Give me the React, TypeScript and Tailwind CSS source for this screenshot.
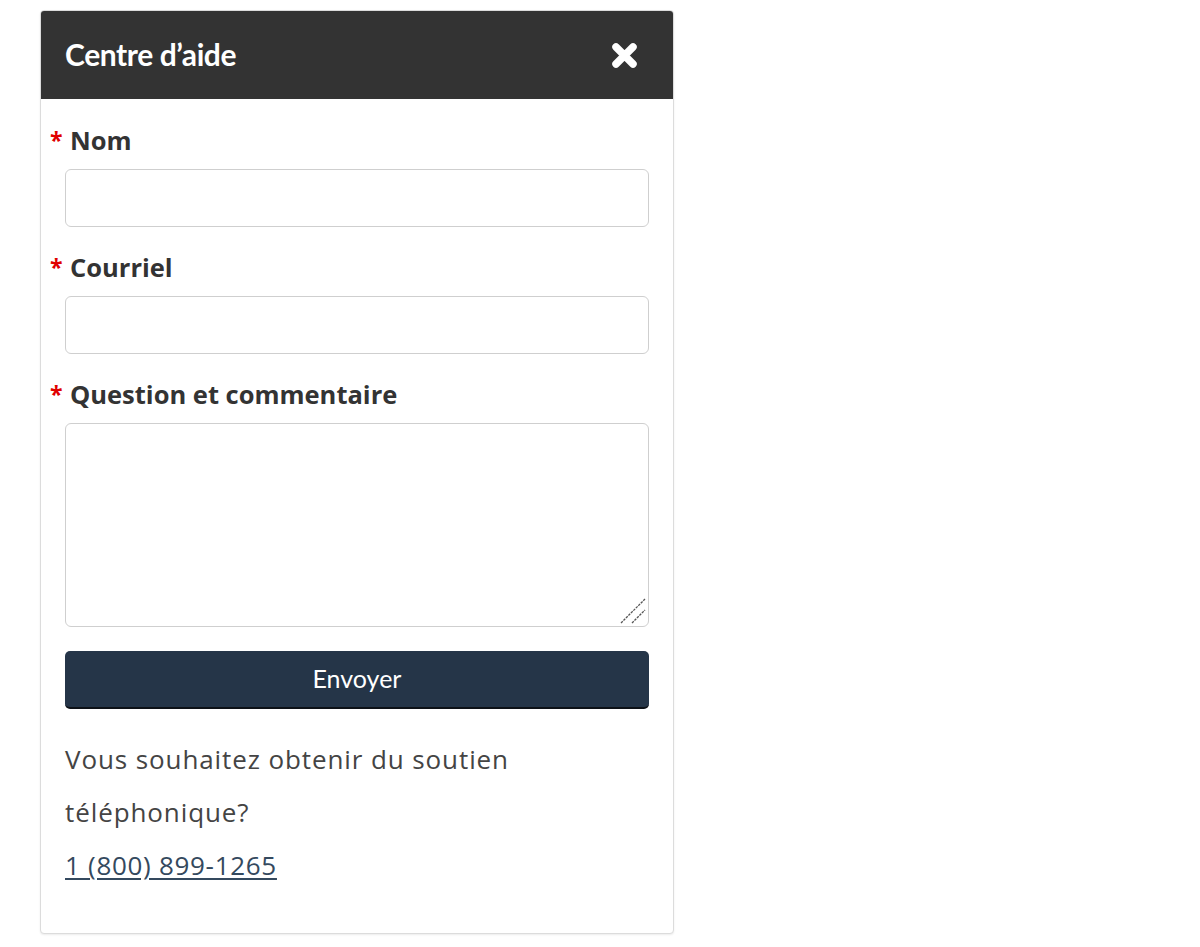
import React from "react";

function Label({ text }: { text: string }) {
  return (
    <div className="flex items-center h-[36px] leading-[36px] font-['Open_Sans',sans-serif] font-bold text-[25.5px] text-[#333] -translate-y-[2px]">
      <span className="w-[30px] pl-[9px] text-[#e00000] text-[23px]">*</span>
      <span className="-ml-[1px]">{text}</span>
    </div>
  );
}

export default function App() {
  return (
    <div className="w-[1200px] h-[947px] bg-white pt-[10px] pl-[40px]">
      <div className="w-[634px] border border-[#dcdcdc] rounded-[4px] overflow-hidden bg-white shadow-[0_1px_2px_rgba(0,0,0,0.08)]">
        <div className="h-[88px] bg-[#333333] flex items-center justify-between pl-[24px] pr-[35px]">
          <h1 className="font-['Lato',sans-serif] font-bold text-[30px] text-white tracking-[-0.4px] -translate-y-[1px]">Centre d’aide</h1>
          <svg width="27" height="27" viewBox="0 0 27 27" className="block">
            <path d="M5 5 L22 22 M22 5 L5 22" stroke="#fff" strokeWidth="7.5" strokeLinecap="round" />
          </svg>
        </div>
        <div className="pt-[25px] pb-[42px]">
          <Label text="Nom" />
          <div className="px-[24px] mt-[9px]">
            <input className="w-full h-[58px] border border-[#cfcfcf] rounded-[6px] bg-white" />
          </div>
          <div className="mt-[24px]">
            <Label text="Courriel" />
          </div>
          <div className="px-[24px] mt-[9px]">
            <input className="w-full h-[58px] border border-[#cfcfcf] rounded-[6px] bg-white" />
          </div>
          <div className="mt-[24px]">
            <Label text="Question et commentaire" />
          </div>
          <div className="px-[24px] mt-[9px]">
            <div className="relative">
              <textarea className="block w-full h-[204px] border border-[#cfcfcf] rounded-[6px] bg-white resize-none" />
              <svg width="28" height="28" viewBox="0 0 28 28" className="absolute right-[2px] bottom-[2px] pointer-events-none">
                <path d="M2 26 L26 2 M13 26 L26 13" stroke="#555" strokeWidth="1.3" strokeDasharray="2.5 1" />
              </svg>
            </div>
            <button className="mt-[24px] w-full h-[58px] bg-[#253548] border-b-[2px] border-[#0d1117] rounded-[5px] text-white font-['Lato',sans-serif] text-[25px]">
              Envoyer
            </button>
            <p className="mt-[24px] font-['Open_Sans',sans-serif] text-[26px] leading-[53px] text-[#444] tracking-[0.9px]">
              Vous souhaitez obtenir du soutien
              <br />
              téléphonique?
            </p>
            <a href="#" className="block font-['Open_Sans',sans-serif] text-[26px] leading-[52px] text-[#34495e] tracking-[0.7px] underline underline-offset-[3px]">
              1 (800) 899-1265
            </a>
          </div>
        </div>
      </div>
    </div>
  );
}
